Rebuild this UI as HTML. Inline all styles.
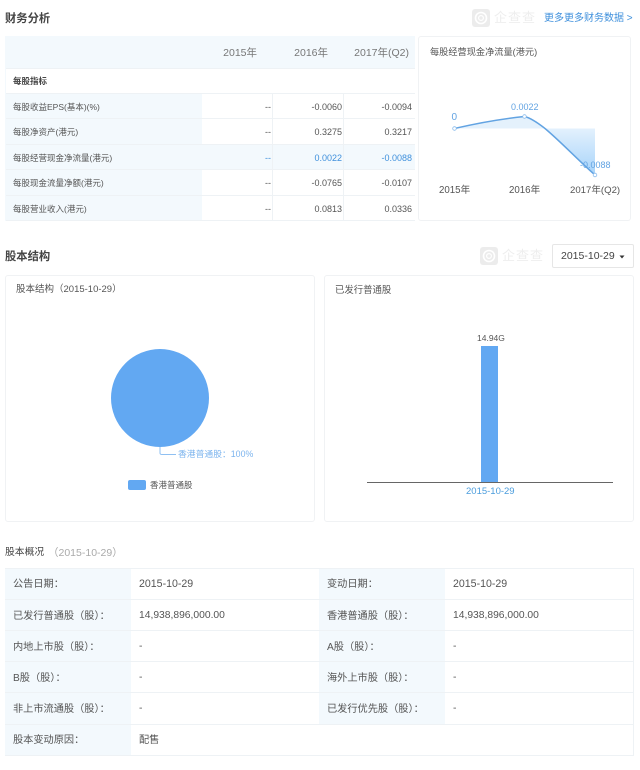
<!DOCTYPE html>
<html lang="zh">
<head>
<meta charset="utf-8">
<title>财务分析</title>
<style>
html,body{margin:0;padding:0;background:#fff;}
body{width:640px;height:770px;position:relative;overflow:hidden;font-family:"Liberation Sans","Noto Sans CJK SC",sans-serif;color:#555;}
.a{position:absolute;white-space:nowrap;}
.bg{position:absolute;background:#f3f9fd;}
.hl{position:absolute;height:1px;background:#eef2f5;}
.vl{position:absolute;width:1px;background:#eef2f5;}
.t{position:absolute;white-space:nowrap;line-height:16px;}
.r1{font-size:8.5px;color:#555;}
.n{font-size:9px;color:#555;text-align:right;width:60px;}
.b{color:#3f90dc;}
.h{font-size:10.5px;color:#777;text-align:right;width:70px;}
.l{font-size:10.2px;color:#555;}
.v{font-size:10.3px;color:#555;}
.card{position:absolute;border:1px solid #f0f2f4;border-radius:3px;box-sizing:border-box;background:#fff;}
</style>
</head>
<body>

<div class="t" style="left:5px;top:11px;font-size:11.3px;color:#444;font-weight:bold;">财务分析</div>

<svg class="a" style="left:472px;top:9px;" width="18" height="18" viewBox="0 0 18 18"><rect width="18" height="18" rx="3" fill="#ececec"/><circle cx="9" cy="9" r="5.5" fill="none" stroke="#fff" stroke-width="1.6"/><circle cx="9" cy="9" r="2.4" fill="none" stroke="#fff" stroke-width="1.2"/></svg>
<div class="t" style="left:494px;top:10px;font-size:13px;letter-spacing:1px;color:#eeeeee;">企查查</div>
<div class="t" style="left:544px;top:11px;font-size:10px;color:#3f90dc;">更多更多财务数据 &gt;</div>

<!-- table 1 -->
<div class="bg" style="left:5px;top:36px;width:410px;height:32px;"></div>
<div class="bg" style="left:5px;top:93px;width:197px;height:127px;"></div>
<div class="bg" style="left:5px;top:144px;width:410px;height:25px;"></div>
<div class="hl" style="left:5px;top:68px;width:410px;"></div>
<div class="hl" style="left:5px;top:93px;width:410px;"></div>
<div class="hl" style="left:5px;top:118px;width:410px;"></div>
<div class="hl" style="left:5px;top:144px;width:410px;"></div>
<div class="hl" style="left:5px;top:169px;width:410px;"></div>
<div class="hl" style="left:5px;top:195px;width:410px;"></div>
<div class="hl" style="left:5px;top:220px;width:410px;"></div>
<div class="vl" style="left:272px;top:93px;height:127px;"></div>
<div class="vl" style="left:343px;top:93px;height:127px;"></div>
<div class="vl" style="left:5px;top:36px;height:185px;background:#f3f9fd;"></div>

<div class="t h" style="left:187px;top:45px;">2015年</div>
<div class="t h" style="left:258px;top:45px;">2016年</div>
<div class="t h" style="left:339px;top:45px;">2017年(Q2)</div>

<div class="t r1" style="left:13px;top:73px;font-weight:bold;color:#444;">每股指标</div>
<div class="t r1" style="left:13px;top:99px;">每股收益EPS(基本)(%)</div>
<div class="t r1" style="left:13px;top:124px;">每股净资产(港元)</div>
<div class="t r1" style="left:13px;top:150px;">每股经营现金净流量(港元)</div>
<div class="t r1" style="left:13px;top:175px;">每股现金流量净额(港元)</div>
<div class="t r1" style="left:13px;top:201px;">每股营业收入(港元)</div>

<div class="t n" style="left:211px;top:99px;">--</div>
<div class="t n" style="left:211px;top:124px;">--</div>
<div class="t n b" style="left:211px;top:150px;">--</div>
<div class="t n" style="left:211px;top:175px;">--</div>
<div class="t n" style="left:211px;top:201px;">--</div>

<div class="t n" style="left:282px;top:99px;">-0.0060</div>
<div class="t n" style="left:282px;top:124px;">0.3275</div>
<div class="t n b" style="left:282px;top:150px;">0.0022</div>
<div class="t n" style="left:282px;top:175px;">-0.0765</div>
<div class="t n" style="left:282px;top:201px;">0.0813</div>

<div class="t n" style="left:352px;top:99px;">-0.0094</div>
<div class="t n" style="left:352px;top:124px;">0.3217</div>
<div class="t n b" style="left:352px;top:150px;">-0.0088</div>
<div class="t n" style="left:352px;top:175px;">-0.0107</div>
<div class="t n" style="left:352px;top:201px;">0.0336</div>

<!-- line chart card -->
<div class="card" style="left:418px;top:36px;width:213px;height:185px;"></div>
<div class="t" style="left:430px;top:44px;font-size:9.2px;color:#555;">每股经营现金净流量(港元)</div>
<svg class="a" style="left:418px;top:100px;" width="213" height="90" viewBox="418 100 213 90">
<defs><linearGradient id="g" x1="0" y1="0" x2="0" y2="1"><stop offset="0" stop-color="#e3f1fd"/><stop offset="1" stop-color="#a6d3fa"/></linearGradient></defs>
<path d="M454.500 128.500 C478 123,500 119,524.500 116.500 C531 118,538 123,545 128.500 Z" fill="#e4f1fc"/>
<path d="M545 128.500 L595 128.500 L595 175 C578 160,560 141,545 128.500 Z" fill="url(#g)"/>
<path d="M454.500 128.500 C478 123,500 119,524.500 116.500 C531 118,538 123,545 128.500 C560 141,578 160,595 175" fill="none" stroke="#62a3e2" stroke-width="1.500"/>
<circle cx="454.500" cy="128.500" r="1.800" fill="#fff" stroke="#8dbdec" stroke-width="0.800"/>
<circle cx="524.500" cy="116.500" r="1.800" fill="#fff" stroke="#8dbdec" stroke-width="0.800"/>
<circle cx="595" cy="175" r="1.800" fill="#fff" stroke="#8dbdec" stroke-width="0.800"/>
</svg>
<div class="t" style="left:451.500px;top:110px;font-size:10px;color:#62a3e2;">0</div>
<div class="t" style="left:511px;top:99px;font-size:9px;color:#62a3e2;">0.0022</div>
<div class="t" style="left:580px;top:157px;font-size:9px;color:#62a3e2;">-0.0088</div>
<div class="t" style="left:439px;top:183px;font-size:9.700px;color:#555;">2015年</div>
<div class="t" style="left:509px;top:183px;font-size:9.700px;color:#555;">2016年</div>
<div class="t" style="left:570px;top:183px;font-size:9.600px;color:#555;">2017年(Q2)</div>

<!-- section 2 -->
<div class="t" style="left:5px;top:249px;font-size:11.300px;color:#444;font-weight:bold;">股本结构</div>
<svg class="a" style="left:480px;top:247px;" width="18" height="18" viewBox="0 0 18 18"><rect width="18" height="18" rx="3" fill="#ececec"/><circle cx="9" cy="9" r="5.500" fill="none" stroke="#fff" stroke-width="1.600"/><circle cx="9" cy="9" r="2.400" fill="none" stroke="#fff" stroke-width="1.200"/></svg>
<div class="t" style="left:502px;top:248px;font-size:13px;letter-spacing:1px;color:#eeeeee;">企查查</div>
<div class="a" style="left:552px;top:244px;width:82px;height:24px;box-sizing:border-box;border:1px solid #e6e6e6;border-radius:2px;"></div>
<div class="t" style="left:561px;top:248px;font-size:10.500px;color:#444;">2015-10-29</div>
<svg class="a" style="left:619px;top:255px;" width="6" height="4" viewBox="0 0 6 4"><path d="M0.500 0.500 H5.500 L3 3.500 Z" fill="#333"/></svg>

<div class="card" style="left:5px;top:275px;width:310px;height:247px;"></div>
<div class="t" style="left:16px;top:282px;font-size:9.500px;color:#555;">股本结构（2015-10-29）</div>
<svg class="a" style="left:100px;top:340px;" width="120" height="120" viewBox="100 340 120 120"><circle cx="160" cy="398" r="49" fill="#62a8f2"/></svg>
<svg class="a" style="left:155px;top:445px;" width="25" height="12" viewBox="155 445 25 12"><path d="M160 447 V453 Q160 454.500 162 454.500 H176" fill="none" stroke="#8fc0f2" stroke-width="1"/></svg>
<div class="t" style="left:178px;top:446px;font-size:8.800px;color:#7cb4ee;">香港普通股：100%</div>
<div class="a" style="left:128px;top:480px;width:18px;height:10px;border-radius:2px;background:#62a8f2;"></div>
<div class="t" style="left:150px;top:477px;font-size:8.500px;color:#555;">香港普通股</div>

<div class="card" style="left:324px;top:275px;width:310px;height:247px;"></div>
<div class="t" style="left:335px;top:282px;font-size:9.400px;color:#555;">已发行普通股</div>
<div class="a" style="left:481px;top:346px;width:17px;height:136px;background:#62a8f2;"></div>
<div class="a" style="left:367px;top:482px;width:246px;height:1px;background:#666;"></div>
<div class="t" style="left:477px;top:330px;font-size:8.500px;color:#555;">14.94G</div>
<div class="t" style="left:466px;top:484px;font-size:9.500px;color:#4b9ddd;">2015-10-29</div>

<!-- section 3 -->
<div class="t" style="left:5px;top:545px;font-size:9.800px;color:#444;">股本概况</div>
<div class="t" style="left:48px;top:545px;font-size:10.500px;color:#aaa;">（2015-10-29）</div>

<div class="bg" style="left:5px;top:568px;width:126px;height:187px;"></div>
<div class="bg" style="left:319px;top:568px;width:126px;height:156px;"></div>
<div class="hl" style="left:5px;top:568px;width:629px;"></div>
<div class="hl" style="left:5px;top:599px;width:629px;"></div>
<div class="hl" style="left:5px;top:630px;width:629px;"></div>
<div class="hl" style="left:5px;top:661px;width:629px;"></div>
<div class="hl" style="left:5px;top:692px;width:629px;"></div>
<div class="hl" style="left:5px;top:724px;width:629px;"></div>
<div class="hl" style="left:5px;top:755px;width:629px;"></div>
<div class="vl" style="left:633px;top:568px;height:188px;"></div>

<div class="t l" style="left:13px;top:577px;">公告日期：</div>
<div class="t l" style="left:13px;top:609px;">已发行普通股（股）：</div>
<div class="t l" style="left:13px;top:640px;">内地上市股（股）：</div>
<div class="t l" style="left:13px;top:671px;">B股（股）：</div>
<div class="t l" style="left:13px;top:702px;">非上市流通股（股）：</div>
<div class="t l" style="left:13px;top:733px;">股本变动原因：</div>

<div class="t v" style="left:139px;top:576px;font-size:10.600px;">2015-10-29</div>
<div class="t v" style="left:139px;top:608px;">14,938,896,000.00</div>
<div class="t v" style="left:139px;top:639px;">-</div>
<div class="t v" style="left:139px;top:670px;">-</div>
<div class="t v" style="left:139px;top:701px;">-</div>
<div class="t l" style="left:139px;top:733px;">配售</div>

<div class="t l" style="left:327px;top:577px;">变动日期：</div>
<div class="t l" style="left:327px;top:609px;">香港普通股（股）：</div>
<div class="t l" style="left:327px;top:640px;">A股（股）：</div>
<div class="t l" style="left:327px;top:671px;">海外上市股（股）：</div>
<div class="t l" style="left:327px;top:702px;">已发行优先股（股）：</div>

<div class="t v" style="left:453px;top:576px;font-size:10.600px;">2015-10-29</div>
<div class="t v" style="left:453px;top:608px;">14,938,896,000.00</div>
<div class="t v" style="left:453px;top:639px;">-</div>
<div class="t v" style="left:453px;top:670px;">-</div>
<div class="t v" style="left:453px;top:701px;">-</div>

</body>
</html>
